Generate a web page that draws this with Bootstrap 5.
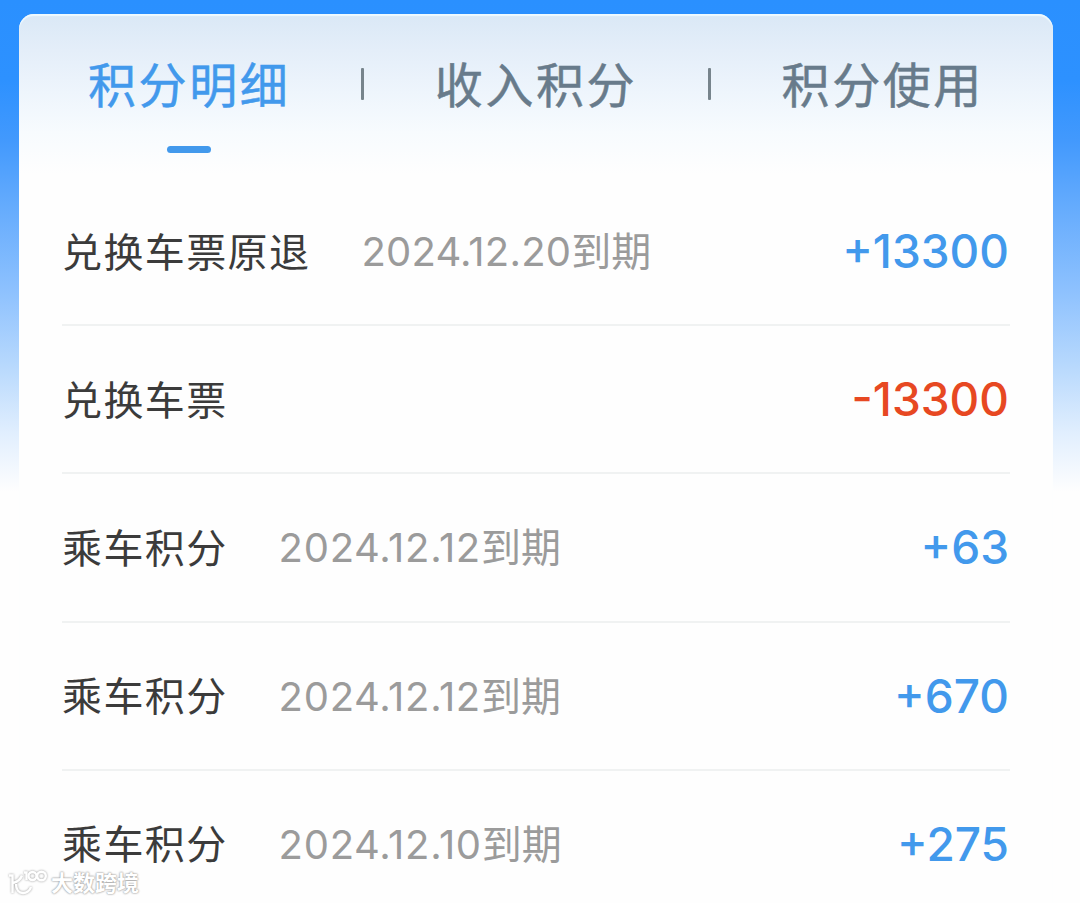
<!DOCTYPE html>
<html lang="zh-CN">
<head>
<meta charset="utf-8">
<meta name="viewport" content="width=device-width, initial-scale=1">
<title>积分明细</title>
<link href="https://cdn.jsdelivr.net/npm/bootstrap@5.3.0/dist/css/bootstrap.min.css" rel="stylesheet">
<style>
body{font-family:Inter,"Noto Sans CJK SC",sans-serif;height:903px;overflow:hidden;background:#fefefe linear-gradient(180deg,#2a90ff 0,#2d91ff 80px,#4299fd 140px,#64abfd 205px,#8dc1fe 290px,#badafd 370px,#e2effe 435px,#fefefe 492px) no-repeat;background-size:100% 500px}
.points-card{margin:14px 27px 0 19px;height:889px;border-radius:15px 15px 0 0;background:linear-gradient(180deg,#dae8f6 0,#e4eef9 36px,#eef5fc 78px,#f7fbfe 118px,#fefefe 160px);box-shadow:inset 0 2px 1px #effaff}
.points-tabs{height:164px;padding:0 69px 0 69px}
.points-tab{height:142px;font-size:48px;line-height:144px;letter-spacing:2.6px;color:#687b8b;font-weight:400;-webkit-text-stroke:.5px currentColor;white-space:nowrap}
.points-tab.active{color:#4299ec}
.points-tab.active::after{content:"";position:absolute;left:79px;top:132px;width:44px;height:7px;border-radius:4px;background:#4299ec}
.tab-rule{width:3px;height:32px;margin-top:54px;border-radius:1px;background:#77848c}
.points-list{padding:0 43px 0 43px}
.points-row{height:148.2px;border-bottom:2px solid #f0f2f2;line-height:1}
.points-row:last-child{border-bottom-color:transparent}
.points-name{font-size:40px;letter-spacing:1.4px;color:#3b3b3b;padding-top:3px}
.points-date{font-size:40px;color:#9b9b9b;margin-left:51px;padding-top:2px}
.points-date span{letter-spacing:.7px}
.points-row:first-child .points-date span{letter-spacing:.2px}
.points-value{font-size:46px;font-weight:500;color:#4299ec;margin-right:1px}
.points-value.minus{color:#e74822}
.site-mark{left:8px;top:866px;color:#fff;font-size:22px;line-height:34px;font-weight:700;text-shadow:0 0 2px #999,0 0 2px #aaa}
.site-mark svg{filter:drop-shadow(0 0 1px #999)}
</style>
</head>
<body>
<main class="points-card">
  <nav class="points-tabs d-flex justify-content-between align-items-start">
    <div class="points-tab active position-relative">积分明细</div><i class="tab-rule"></i>
    <div class="points-tab">收入积分</div><i class="tab-rule"></i>
    <div class="points-tab">积分使用</div>
  </nav>
  <div class="points-list">
    <div class="points-row d-flex align-items-center"><span class="points-name">兑换车票原退</span><span class="points-date"><span>2024.12.20</span>到期</span><span class="points-value ms-auto">+13300</span></div>
    <div class="points-row d-flex align-items-center"><span class="points-name">兑换车票</span><span class="points-value minus ms-auto">-13300</span></div>
    <div class="points-row d-flex align-items-center"><span class="points-name">乘车积分</span><span class="points-date"><span>2024.12.12</span>到期</span><span class="points-value ms-auto">+63</span></div>
    <div class="points-row d-flex align-items-center"><span class="points-name">乘车积分</span><span class="points-date"><span>2024.12.12</span>到期</span><span class="points-value ms-auto">+670</span></div>
    <div class="points-row d-flex align-items-center"><span class="points-name">乘车积分</span><span class="points-date"><span>2024.12.10</span>到期</span><span class="points-value ms-auto">+275</span></div>
  </div>
</main>
<div class="site-mark position-absolute d-flex align-items-center">
  <svg width="43" height="34" viewBox="0 0 43 34" fill="none" stroke="#fff" stroke-width="2.4"><path d="M1 9.500h3.500V27M14 9.500Q12 15 5 17M8 18C8 30 21 29 23 21M16 6.500h2.500V14"/><circle cx="24.500" cy="10" r="4"/><circle cx="33.500" cy="10" r="4.300"/></svg>
  <span>大数跨境</span>
</div>
<script src="https://cdn.jsdelivr.net/npm/bootstrap@5.3.0/dist/js/bootstrap.bundle.min.js"></script>
</body>
</html>
